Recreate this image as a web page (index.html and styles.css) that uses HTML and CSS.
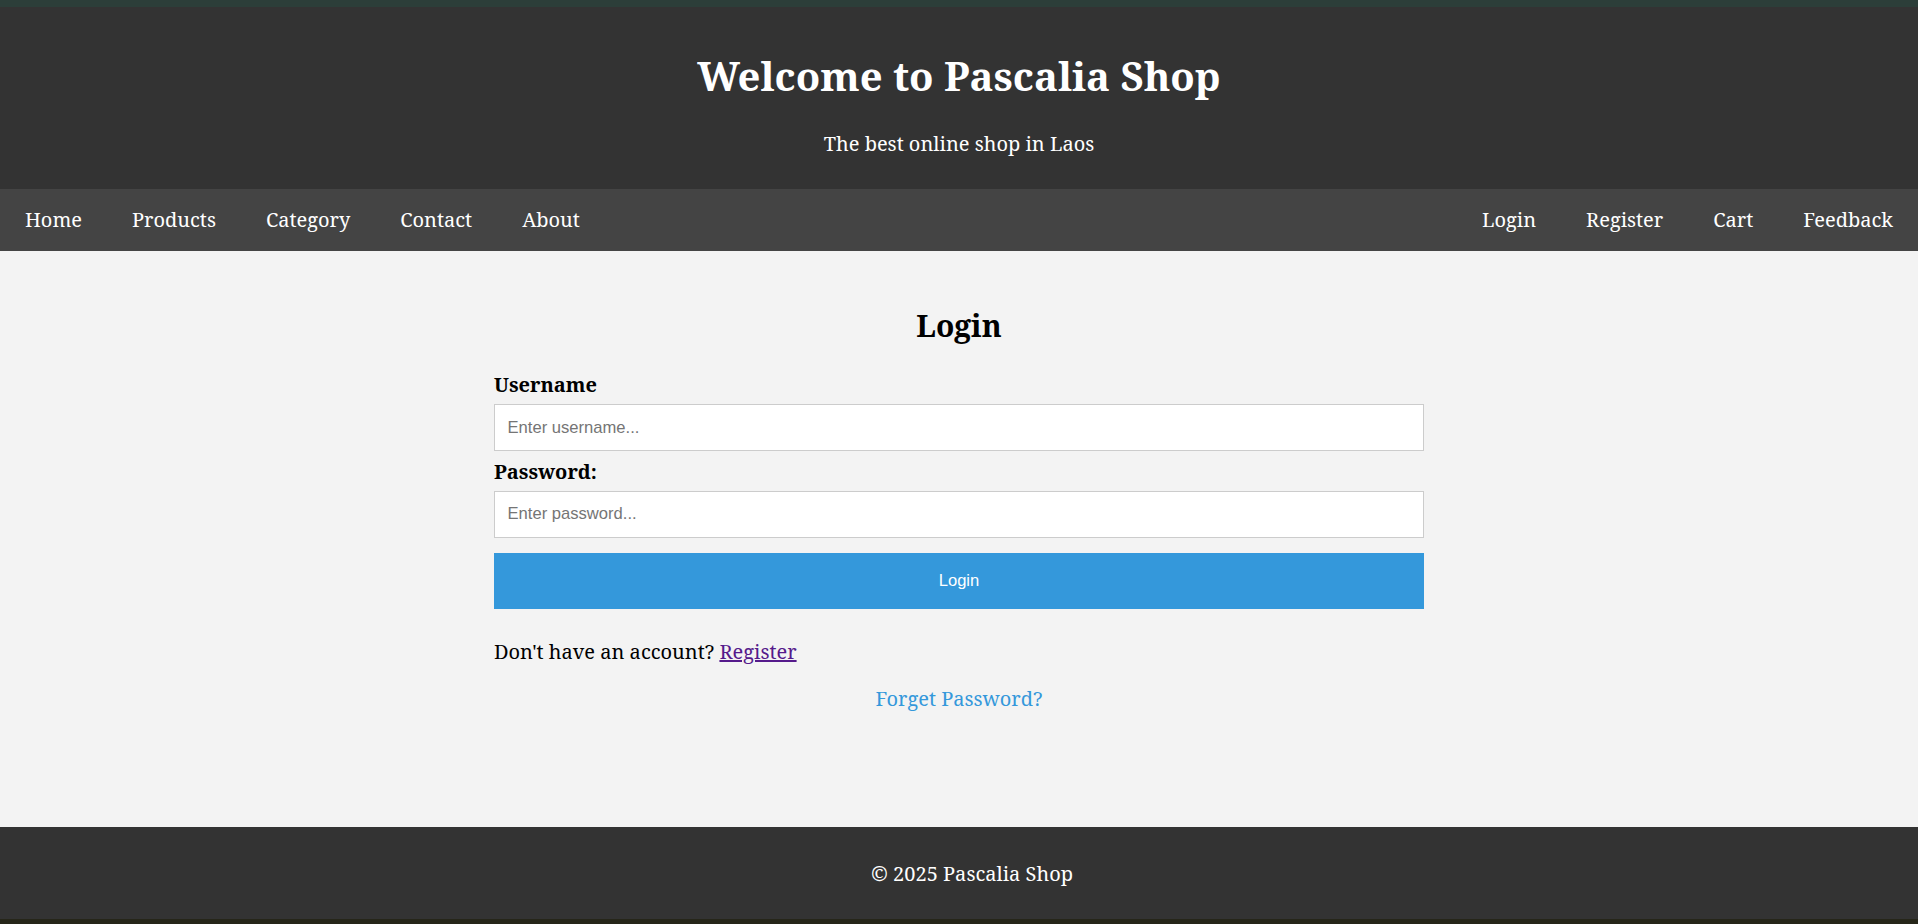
FILE: index.html
```html
<!DOCTYPE html>
<html lang="en">
<head>
<meta charset="utf-8">
<title>Pascalia Shop - Login</title>
<link rel="stylesheet" href="styles.css">
</head>
<body>
<div class="top-strip"></div>
<header class="site-header">
  <h1>Welcome to Pascalia Shop</h1>
  <p>The best online shop in Laos</p>
</header>
<nav class="site-nav">
  <div class="nav-group">
    <a href="#">Home</a>
    <a href="#">Products</a>
    <a href="#">Category</a>
    <a href="#">Contact</a>
    <a href="#">About</a>
  </div>
  <div class="nav-group">
    <a href="#">Login</a>
    <a href="#">Register</a>
    <a href="#">Cart</a>
    <a href="#">Feedback</a>
  </div>
</nav>
<main class="main">
  <div class="login-box">
    <h2>Login</h2>
    <form class="login-form">
      <label for="username">Username</label>
      <input id="username" type="text" placeholder="Enter username...">
      <label for="password">Password:</label>
      <input id="password" type="password" placeholder="Enter password...">
      <button type="button">Login</button>
    </form>
    <p class="signup">Don't have an account? <a class="visited" href="#">Register</a></p>
    <p class="forgot"><a href="#">Forget Password?</a></p>
  </div>
</main>
<footer class="site-footer">
  <p>&copy; 2025 Pascalia Shop</p>
</footer>
<div class="bottom-strip"></div>
</body>
</html>
```
FILE: styles.css
```css
* { box-sizing: border-box; }
html, body { margin: 0; padding: 0; }
body {
  font-family: "Noto Serif", "DejaVu Serif", serif;
  font-size: 20px;
  background: #f3f3f3;
  color: #000;
  height: 924px;
  display: flex;
  flex-direction: column;
}
.top-strip { height: 7px; background: #2c3e39; flex: none; }
.bottom-strip { height: 5px; background: #262619; flex: none; }
.site-header {
  background: #333;
  color: #fff;
  text-align: center;
  padding: 12.5px 0;
  flex: none;
}
.site-header h1 { font-size: 40px; margin: 28.5px 0 26.8px; line-height: 55px; }
.site-header p { margin: 20px 0; line-height: 27px; }
.site-nav {
  background: #444;
  display: flex;
  justify-content: space-between;
  flex: none;
}
.nav-group { display: flex; }
.nav-group a {
  color: #fff;
  text-decoration: none;
  padding: 16.5px 25px 18.5px;
  line-height: 27px;
}
.main { flex: 1; padding-top: 0.1px; }
.login-box { width: 930px; margin: 0 auto; padding-top: 29px; }
.login-box h2 { font-size: 30px; text-align: center; margin: 25px 0 25px; line-height: 41px; }
.login-form { display: flex; flex-direction: column; }
.login-form label { font-weight: bold; line-height: 27px; }
.login-form input {
  height: 47px;
  margin: 6px 0 6.5px;
  padding: 0 12.5px;
  border: 1px solid #ccc;
  background: #fff;
  font-family: "Liberation Sans", Arial, sans-serif;
  font-size: 16.6px;
  color: #333;
}
.login-form input::placeholder { color: #757575; }
.login-form button {
  margin-top: 9px;
  height: 55.5px;
  border: none;
  background: #3498db;
  color: #fff;
  font-family: "Liberation Sans", Arial, sans-serif;
  font-size: 16.6px;
}
.signup { margin: 29.5px 0 20px; line-height: 27px; }
.signup a { color: #551a8b; }
.forgot { text-align: center; margin: 20px 0; line-height: 27px; }
.forgot a { color: #3498db; text-decoration: none; }
.site-footer {
  background: #333;
  color: #fff;
  text-align: center;
  padding: 12.5px 0;
  flex: none;
  height: 92px;
}
.site-footer p { margin: 20px 0; line-height: 27px; padding-left: 26px; }
```
